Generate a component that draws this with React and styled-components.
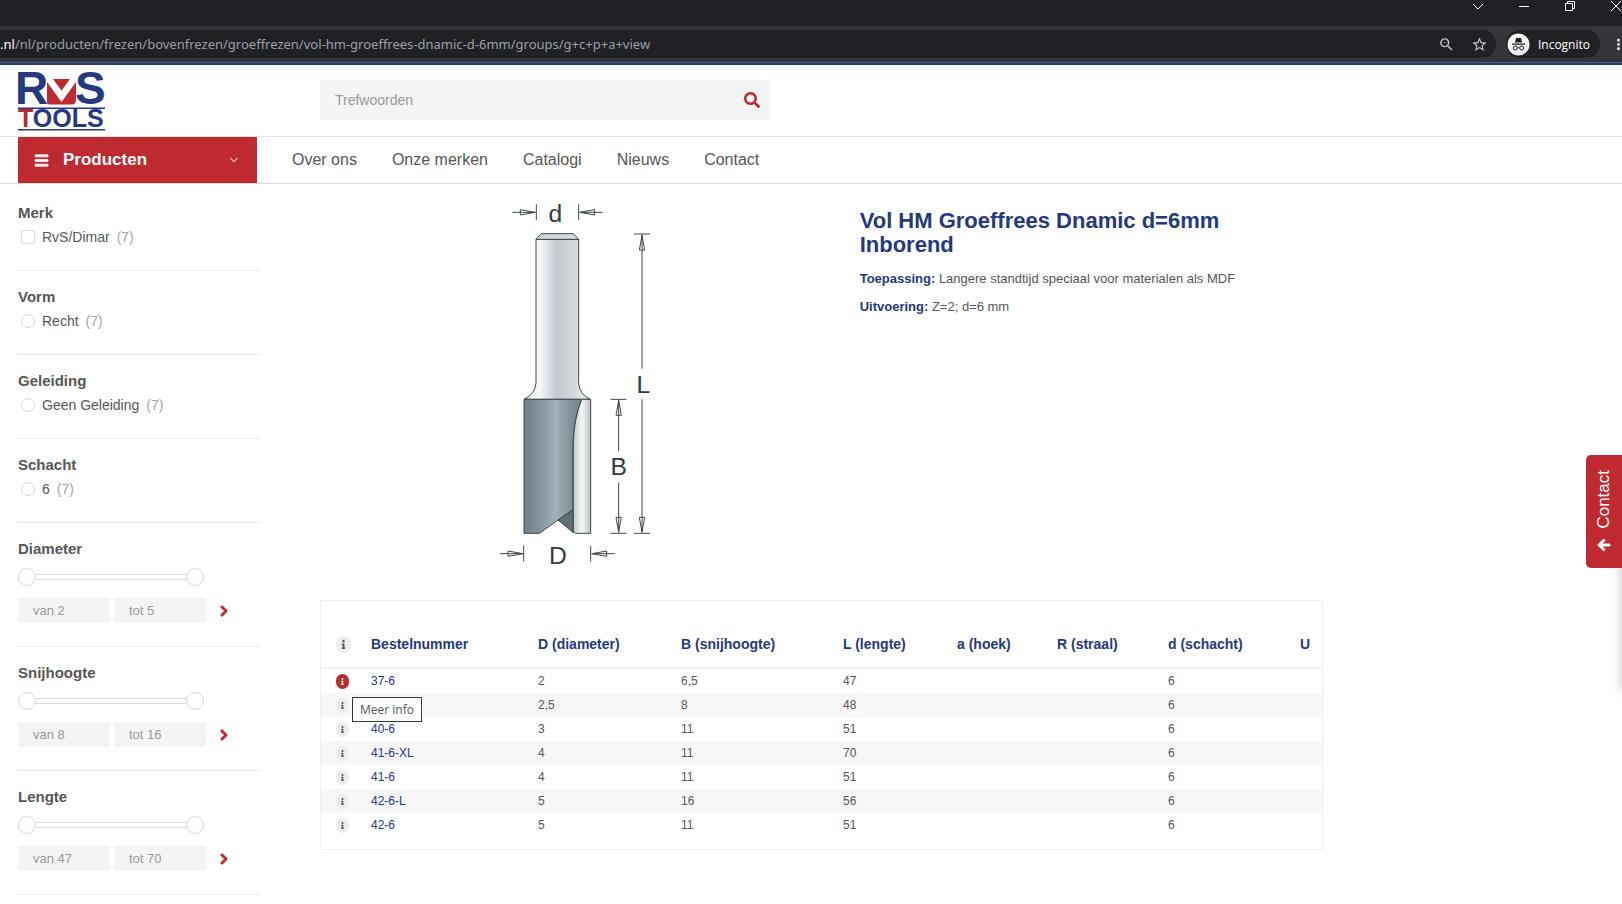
import styled, { createGlobalStyle, css } from "styled-components";
import {
  FaArrowLeft,
  FaBars,
  FaChevronRight,
  FaInfo,
  FaSearch,
} from "react-icons/fa";
import {
  MdOutlineZoomOut,
  MdStarOutline,
  MdMoreVert,
} from "react-icons/md";
import { FiChevronDown } from "react-icons/fi";

const GlobalStyle = createGlobalStyle`
  * {
    box-sizing: border-box;
  }
  body {
    margin: 0;
    background: #fff;
    color: #575757;
    font-family: "Liberation Sans", Arial, sans-serif;
    font-size: 14px;
    overflow: hidden;
  }
  button, input {
    font-family: inherit;
  }
  button {
    padding: 0;
    border: 0;
    background: none;
    cursor: pointer;
  }
  a {
    color: inherit;
    text-decoration: none;
  }
`;

/* browser bar */

const TitleBar = styled.div`
  display: flex;
  justify-content: flex-end;
  gap: 34px;
  height: 26px;
  background: #202124;
  overflow: hidden;
`;

const WindowButton = styled.button`
  flex: none;
  width: 12px;
  height: 12px;
  color: #fff;

  svg {
    display: block;
  }
`;

const ToolBar = styled.div`
  display: flex;
  align-items: center;
  height: 37px;
  background: #35363a;
  border-bottom: 1px solid #5b5c5f;
`;

const AddressBar = styled.div`
  flex: 1;
  display: flex;
  align-items: center;
  gap: 16px;
  height: 28px;
  padding-right: 8px;
  background: #202124;
  border-radius: 0 14px 14px 0;
  color: #9aa0a6;
  font-family: "Noto Sans", sans-serif;
  font-size: 13px;
  white-space: nowrap;
`;

const Url = styled.span`
  flex: 1;

  b {
    color: #fff;
    font-weight: 400;
  }
`;

const BarButton = styled.button`
  display: flex;
  color: #c4c7cb;
  font-size: 17px;
`;

const Incognito = styled.button`
  display: flex;
  align-items: center;
  gap: 8px;
  height: 28px;
  margin: 0 10px;
  padding: 0 10px 0 1px;
  border-radius: 14px;
  background: #202124;
  color: #fff;
  font-family: "Open Sans", "Noto Sans", sans-serif;
  font-size: 12px;
`;

const MenuButton = styled(BarButton)`
  width: 12px;
  color: #fff;
  overflow: hidden;

  svg {
    flex: none;
  }
`;

/* site header */

const Header = styled.header`
  display: flex;
  align-items: center;
  gap: 60px;
  height: 74px;
  padding: 0 18px 1px;
  border-top: 2px solid #26387f;
  border-bottom: 1px solid #e8e8e8;
`;

const LogoLink = styled.a`
  width: 242px;

  svg {
    display: block;
    overflow: visible;
  }
`;

const SearchForm = styled.form`
  display: flex;
  align-items: center;
  width: 450px;
  height: 40px;
  padding: 0 10px 0 15px;
  background: #f4f4f4;

  button {
    display: flex;
    color: #be2a30;
    font-size: 16px;
  }
`;

const SearchInput = styled.input`
  flex: 1;
  padding: 0;
  border: 0;
  outline: 0;
  background: none;
  color: #575757;
  font-size: 14px;

  &::placeholder {
    color: #999;
  }
`;

const Nav = styled.nav`
  display: flex;
  align-items: center;
  gap: 35px;
  height: 47px;
  padding-left: 18px;
  border-bottom: 1px solid #d9d9d9;
  font-size: 16px;
`;

const ProductsButton = styled.button`
  display: flex;
  align-items: center;
  gap: 14px;
  width: 239px;
  height: 46px;
  padding: 0 16px;
  background: #be2a30;
  color: #fff;
  font-size: 17px;
  font-weight: 700;
`;

const ProductsLabel = styled.span`
  flex: 1;
  text-align: left;
`;

const HeavyIcon = styled.span`
  display: flex;

  svg {
    stroke: currentColor;
    stroke-width: ${(props) => props.$weight}px;
  }
`;

/* filters */

const Page = styled.div`
  display: flex;
  gap: 60px;
  padding: 3px 18px 0;
`;

const Sidebar = styled.aside`
  flex: none;
  width: 242px;
`;

const FilterGroup = styled.fieldset`
  display: block;
  height: ${(props) => (props.$range ? 124 : 84)}px;
  margin: 0;
  padding: 0;
  border: 0;
  border-bottom: 1px solid #ececec;
`;

const FilterTitle = styled.legend`
  padding: 16px 0 0;
  font-size: 15px;
  font-weight: 700;
  line-height: 20px;
`;

const Option = styled.label`
  display: flex;
  align-items: center;
  gap: 7px;
  height: 28px;
  padding-left: 3px;

  span {
    color: #a5a5a5;
  }
`;

const OptionInput = styled.input`
  appearance: none;
  width: 14px;
  height: 14px;
  margin: 0;
  border: 1px solid #d9d9d9;
  border-radius: ${(props) => (props.type === "radio" ? "50%" : "2px")};
  background: #fff;
`;

const Slider = styled.div`
  display: grid;
  align-items: center;
  width: 186px;
  height: 18px;
  margin: 9px 0 12px;

  &::before {
    content: "";
    grid-area: 1 / 1;
    height: 4px;
    border: 1px solid #d9d9d9;
    border-width: 1px 0;
  }
`;

const thumb = css`
  appearance: none;
  width: 18px;
  height: 18px;
  border: 1px solid #d9d9d9;
  border-radius: 50%;
  background: #fff;
  pointer-events: auto;
`;

const RangeInput = styled.input`
  grid-area: 1 / 1;
  appearance: none;
  width: 100%;
  height: 18px;
  margin: 0;
  background: none;
  pointer-events: none;

  &::-webkit-slider-thumb {
    ${thumb}
  }
`;

const RangeFields = styled.div`
  display: flex;
  align-items: center;
  gap: 4px;

  button {
    display: flex;
    margin-left: 8px;
    color: #be2a30;
    font-size: 12px;
  }
`;

const RangeField = styled.input`
  width: 92px;
  height: 25px;
  padding: 0 15px 1px;
  border: 0;
  background: #f4f4f4;
  color: #999;
  font-size: 13px;
`;

/* product */

const Main = styled.main`
  flex: 1;
  max-width: 1003px;
  padding-top: 3px;
`;

const Product = styled.section`
  display: grid;
  grid-template-columns: 11fr 10fr;
  gap: 30px;
  margin-bottom: 20px;
`;

const Figure = styled.figure`
  display: flex;
  justify-content: center;
  margin: 0;
`;

const Info = styled.div`
  max-width: 400px;
  padding-top: 19px;
  font-size: 13px;

  p {
    margin: 0 0 12px;
    line-height: 16px;
  }

  strong {
    color: #26387f;
  }
`;

const Title = styled.h1`
  margin: 0 0 14px;
  color: #26387f;
  font-size: 22px;
  line-height: 24px;
`;

const Panel = styled.section`
  padding-bottom: 12px;
  border: 1px solid #f0f0f0;
`;

const Table = styled.table`
  width: 100%;
  table-layout: fixed;
  border-collapse: separate;
  border-spacing: 0;
  font-size: 12px;
`;

const Column = styled.col`
  width: ${(props) => props.$width};
`;

const HeadCell = styled.th`
  height: 68px;
  padding: 20px 0 0 12px;
  border-bottom: 2px solid #f3f3f3;
  color: #26387f;
  font-size: 14px;
  text-align: left;
  white-space: nowrap;
`;

const Row = styled.tr`
  height: 24px;

  &:nth-child(even) {
    background: #f7f7f7;
  }
`;

const Cell = styled.td`
  position: relative;
  padding: 0 0 0 12px;
  line-height: 16px;

  a {
    color: #26387f;
  }
`;

const InfoButton = styled.button`
  display: flex;
  align-items: center;
  justify-content: center;
  width: ${(props) => (props.$large ? 15 : 13)}px;
  height: ${(props) => (props.$large ? 17 : 15)}px;
  margin-left: 3px;
  border-radius: 8px;
  background: ${(props) => (props.$active ? "#be2a30" : "#ededf0")};
  color: ${(props) => (props.$active ? "#fff" : "#575757")};
  font-size: ${(props) => (props.$large ? 9 : 7)}px;
`;

const Tooltip = styled.div`
  position: absolute;
  z-index: 1;
  top: 28px;
  left: 31px;
  padding: 4px 7px 3px;
  border: 1px solid #3a3a3a;
  background: #fff;
  font-family: "Open Sans", "Noto Sans", sans-serif;
  white-space: nowrap;
`;

const ContactTab = styled.button`
  position: fixed;
  top: 455px;
  right: 0;
  display: flex;
  flex-direction: column;
  align-items: center;
  gap: 9px;
  width: 36px;
  height: 113px;
  padding-top: 15px;
  border-radius: 5px 0 0 5px;
  background: #be2a30;
  color: #fff;
  font-size: 17px;
`;

const ContactLabel = styled.span`
  writing-mode: vertical-rl;
  transform: rotate(180deg);
`;

const EdgeShadow = styled.div`
  position: fixed;
  top: 460px;
  right: -10px;
  width: 10px;
  height: 230px;
  box-shadow: 0 0 12px rgba(0, 0, 0, 0.25);
`;

const navLinks = ["Over ons", "Onze merken", "Catalogi", "Nieuws", "Contact"];

const optionFilters = [
  { title: "Merk", type: "checkbox", option: "RvS/Dimar" },
  { title: "Vorm", type: "radio", option: "Recht" },
  { title: "Geleiding", type: "radio", option: "Geen Geleiding" },
  { title: "Schacht", type: "radio", option: "6" },
];

const rangeFilters = [
  { title: "Diameter", min: 2, max: 5 },
  { title: "Snijhoogte", min: 8, max: 16 },
  { title: "Lengte", min: 47, max: 70 },
];

const columnWidths = [
  "38px",
  "167px",
  "143px",
  "162px",
  "114px",
  "100px",
  "111px",
  "132px",
  "auto",
];

const headings = [
  "Bestelnummer",
  "D (diameter)",
  "B (snijhoogte)",
  "L (lengte)",
  "a (hoek)",
  "R (straal)",
  "d (schacht)",
  "U",
];

const articles = [
  ["37-6", "2", "6,5", "47"],
  ["", "2,5", "8", "48"],
  ["40-6", "3", "11", "51"],
  ["41-6-XL", "4", "11", "70"],
  ["41-6", "4", "11", "51"],
  ["42-6-L", "5", "16", "56"],
  ["42-6", "5", "11", "51"],
];

const Logo = () => (
  <svg width="88" height="60" viewBox="18 70 88 60" role="img" aria-label="RvS Tools">
    <g fill="#26387f" fontFamily="Liberation Sans" fontWeight="700">
      <text x="15" y="104" fontSize="46">R</text>
      <text x="75" y="104" fontSize="46">S</text>
      <text x="18" y="127" fontSize="25">
        <tspan fill="#be2a30">T</tspan>OOLS
      </text>
      <path d="M18 107.500h87v1.500h-87zM18 129h87v1.500h-87z" />
    </g>
    <path d="M47 82 61.500 102 76 82V100q-.5 4.500-4 4.500H49.500Q47 104.500 47 102zM53 79H70L61.500 90.500z" fill="#be2a30" />
  </svg>
);

const IncognitoIcon = () => (
  <svg width="23" height="23" viewBox="0 0 23 23">
    <circle cx="11.500" cy="11.500" r="11" fill="#f1f3f4" />
    <path d="M8 9.500 9 5.200q.3-.7 1-.4l1.500.4 1.500-.4q.7-.3 1 .4l1 4.300zM5 10.600h13v1.100H5z" fill="#202124" />
    <g fill="none" stroke="#202124">
      <circle cx="8.300" cy="15" r="2" />
      <circle cx="14.700" cy="15" r="2" />
      <path d="M10.300 15q1.200-.8 2.400 0" />
    </g>
  </svg>
);

const Arrow = ({ x, y, angle, length }) => (
  <g transform={`translate(${x} ${y}) rotate(${angle})`}>
    <path d={`M0 0H${-length}`} />
    <path d="M-2 0-46-8V8z" fill="#fff" />
    <path d="M-4 0-46 0" />
  </g>
);

const RouterBit = () => (
  <svg width="190" height="390" viewBox="0 0 570 1170" role="img" aria-label="Groeffrees">
    <defs>
      <linearGradient id="shank">
        <stop offset="0" stopColor="#c9cdd0" />
        <stop offset="0.12" stopColor="#f4f5f6" />
        <stop offset="0.25" stopColor="#f4f5f6" />
        <stop offset="0.5" stopColor="#c3c9d2" />
        <stop offset="0.75" stopColor="#d3d7db" />
        <stop offset="0.92" stopColor="#e6e9ea" />
        <stop offset="1" stopColor="#b3b9bb" />
      </linearGradient>
      <linearGradient id="cutter">
        <stop offset="0" stopColor="#6f8087" />
        <stop offset="0.25" stopColor="#82929a" />
        <stop offset="0.55" stopColor="#a2b0b8" />
        <stop offset="0.8" stopColor="#82929a" />
        <stop offset="1" stopColor="#73848b" />
      </linearGradient>
      <linearGradient id="edge">
        <stop offset="0" stopColor="#c3c8ca" />
        <stop offset="0.5" stopColor="#f5f6f6" />
        <stop offset="1" stopColor="#b9bfc1" />
      </linearGradient>
    </defs>
    <g stroke="#3f484c" strokeWidth="3">
      <path d="M168 148H296V580Q298 612 331 628H132Q165 612 168 580z" fill="url(#shank)" />
      <path d="M168 148 184 131H280L296 148z" fill="#d3d9da" />
      <path d="M234 990 280 958V1028z" fill="#5d6e75" />
      <path d="M132 628H305Q280 690 279 760V958L178 1030H132z" fill="url(#cutter)" />
      <path d="M305 628H332V1030H288L280 1024V760Q281 690 305 628z" fill="url(#edge)" />
    </g>
    <g stroke="#3f484c" strokeWidth="3" fill="none">
      <path d="M169 43V90M296 43V90M131 1067V1115M332 1067V1115" />
      <path d="M462 132H510M462 1030H510M392 628H439M392 1030H439" />
      <Arrow x={167} y={67} angle={0} length={70} />
      <Arrow x={298} y={67} angle={180} length={70} />
      <Arrow x={130} y={1091} angle={0} length={70} />
      <Arrow x={334} y={1091} angle={180} length={70} />
      <Arrow x={486} y={134} angle={-90} length={402} />
      <Arrow x={486} y={1028} angle={90} length={400} />
      <Arrow x={416} y={630} angle={-90} length={154} />
      <Arrow x={416} y={1028} angle={90} length={150} />
    </g>
    <g fill="#333c42" fontFamily="Liberation Sans" fontSize="74" textAnchor="middle">
      <text x="226" y="96">d</text>
      <text x="490" y="608">L</text>
      <text x="416" y="855">B</text>
      <text x="234" y="1121">D</text>
    </g>
  </svg>
);

const BrowserBar = () => (
  <>
    <TitleBar>
      <WindowButton aria-label="Tabbladen zoeken">
        <svg width="12" height="12" fill="none" stroke="currentColor">
          <path d="M1 4 6 9 11 4" />
        </svg>
      </WindowButton>
      <WindowButton aria-label="Minimaliseren">
        <svg width="12" height="12" fill="none" stroke="currentColor">
          <path d="M1 6.500h10" />
        </svg>
      </WindowButton>
      <WindowButton aria-label="Verkleinen">
        <svg width="12" height="12" fill="none" stroke="currentColor">
          <path d="M1.500 3.500h7v7h-7zM3.500 3V1.500h7v7H9" />
        </svg>
      </WindowButton>
      <WindowButton aria-label="Sluiten">
        <svg width="12" height="12" fill="none" stroke="currentColor">
          <path d="M1 1 11 11M11 1 1 11" />
        </svg>
      </WindowButton>
    </TitleBar>
    <ToolBar>
      <AddressBar>
        <Url>
          <b>.nl</b>
          /nl/producten/frezen/bovenfrezen/groeffrezen/vol-hm-groeffrees-dnamic-d-6mm/groups/g+c+p+a+view
        </Url>
        <BarButton aria-label="Zoom">
          <MdOutlineZoomOut />
        </BarButton>
        <BarButton aria-label="Bladwijzer">
          <MdStarOutline />
        </BarButton>
      </AddressBar>
      <Incognito>
        <IncognitoIcon />
        Incognito
      </Incognito>
      <MenuButton aria-label="Menu">
        <MdMoreVert />
      </MenuButton>
    </ToolBar>
  </>
);

const RangeFilter = ({ title, min, max }) => (
  <FilterGroup $range>
    <FilterTitle>{title}</FilterTitle>
    <Slider>
      <RangeInput type="range" min={min} max={max} defaultValue={min} aria-label={`${title} van`} />
      <RangeInput type="range" min={min} max={max} defaultValue={max} aria-label={`${title} tot`} />
    </Slider>
    <RangeFields>
      <RangeField defaultValue={`van ${min}`} aria-label={`${title} minimum`} />
      <RangeField defaultValue={`tot ${max}`} aria-label={`${title} maximum`} />
      <button aria-label={`${title} toepassen`}>
        <HeavyIcon $weight={44}>
          <FaChevronRight />
        </HeavyIcon>
      </button>
    </RangeFields>
  </FilterGroup>
);

const ArticleTable = () => (
  <Panel>
    <Table>
      <colgroup>
        {columnWidths.map((width, i) => (
          <Column key={i} $width={width} />
        ))}
      </colgroup>
      <thead>
        <tr>
          <HeadCell>
            <InfoButton $large aria-label="Info">
              <FaInfo />
            </InfoButton>
          </HeadCell>
          {headings.map((heading) => (
            <HeadCell key={heading}>{heading}</HeadCell>
          ))}
        </tr>
      </thead>
      <tbody>
        {articles.map(([number, diameter, height, length], i) => (
          <Row key={i}>
            <Cell>
              <InfoButton $active={i === 0} aria-label="Meer info">
                <FaInfo />
              </InfoButton>
              {i === 0 && <Tooltip role="tooltip">Meer info</Tooltip>}
            </Cell>
            <Cell>{number && <a href={`#${number}`}>{number}</a>}</Cell>
            <Cell>{diameter}</Cell>
            <Cell>{height}</Cell>
            <Cell>{length}</Cell>
            <Cell />
            <Cell />
            <Cell>6</Cell>
            <Cell />
          </Row>
        ))}
      </tbody>
    </Table>
  </Panel>
);

const App = () => {
  return (
    <>
      <GlobalStyle />
      <BrowserBar />
      <Header>
        <LogoLink href="#home">
          <Logo />
        </LogoLink>
        <SearchForm>
          <SearchInput placeholder="Trefwoorden" aria-label="Trefwoorden" />
          <button type="button" aria-label="Zoeken">
            <FaSearch />
          </button>
        </SearchForm>
      </Header>
      <Nav>
        <ProductsButton>
          <HeavyIcon $weight={24}>
            <FaBars size={15} />
          </HeavyIcon>
          <ProductsLabel>Producten</ProductsLabel>
          <FiChevronDown size={14} opacity={0.6} />
        </ProductsButton>
        {navLinks.map((link) => (
          <a key={link} href="#nav">
            {link}
          </a>
        ))}
      </Nav>
      <Page>
        <Sidebar>
          {optionFilters.map(({ title, type, option }) => (
            <FilterGroup key={title}>
              <FilterTitle>{title}</FilterTitle>
              <Option>
                <OptionInput type={type} name={title} />
                {option} <span>(7)</span>
              </Option>
            </FilterGroup>
          ))}
          {rangeFilters.map((filter) => (
            <RangeFilter key={filter.title} {...filter} />
          ))}
        </Sidebar>
        <Main>
          <Product>
            <Figure>
              <RouterBit />
            </Figure>
            <Info>
              <Title>Vol HM Groeffrees Dnamic d=6mm Inborend</Title>
              <p>
                <strong>Toepassing:</strong> Langere standtijd speciaal voor
                materialen als MDF
              </p>
              <p>
                <strong>Uitvoering:</strong> Z=2; d=6 mm
              </p>
            </Info>
          </Product>
          <ArticleTable />
        </Main>
      </Page>
      <EdgeShadow />
      <ContactTab>
        <ContactLabel>Contact</ContactLabel>
        <HeavyIcon $weight={30}>
          <FaArrowLeft size={14} />
        </HeavyIcon>
      </ContactTab>
    </>
  );
};

export default App;
